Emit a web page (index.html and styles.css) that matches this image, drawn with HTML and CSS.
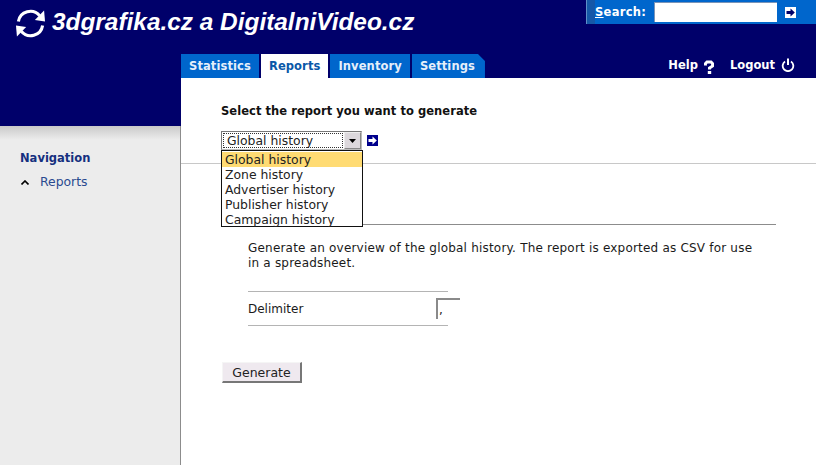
FILE: index.html
```html
<!DOCTYPE html>
<html lang="en">
<head>
<meta charset="utf-8">
<title>Reports</title>
<link rel="stylesheet" href="styles.css">
</head>
<body>
<header class="header">
  <div class="top">
    <div class="brand">
      <svg class="logo" viewBox="0 0 32 32" width="31" height="31">
        <path d="M3.500 14A12.500 12.500 0 0 1 25.500 8" fill="none" stroke="#fff" stroke-width="3.200"/>
        <path d="M20.500 12.500L31 14L30 2.500Z" fill="#fff"/>
        <path d="M28.500 18A12.500 12.500 0 0 1 6.500 24" fill="none" stroke="#fff" stroke-width="3.200"/>
        <path d="M11.500 19.500L1 18L2 29.500Z" fill="#fff"/>
      </svg>
      <span class="brand-name">3dgrafika.cz a DigitalniVideo.cz</span>
    </div>
    <form class="search">
      <label class="search-label"><u>S</u>earch:</label>
      <span class="search-input"></span>
      <svg class="go" viewBox="0 0 11 11" width="11" height="11"><rect width="11" height="11" fill="#fff"/><path d="M1.500 4H5.500V1.500L9.800 5.500L5.500 9.500V7H1.500Z" fill="#00006a"/></svg>
    </form>
  </div>
  <div class="bar">
    <nav class="tabs">
      <a class="tab">Statistics</a>
      <a class="tab tab-active">Reports</a>
      <a class="tab">Inventory</a>
      <a class="tab tab-last">Settings</a>
    </nav>
    <div class="links">
      <a class="link link-help">Help
        <svg class="help-icon" viewBox="0 0 12 14" width="12" height="14"><path d="M2.500 5.500V3.500L4 2H8L9.500 3.500V6L6.500 8V9.500" fill="none" stroke="#fff" stroke-width="3"/><rect x="4.800" y="11" width="3.400" height="3" fill="#fff"/></svg>
      </a>
      <a class="link">Logout
        <svg viewBox="0 0 14 14" width="14" height="14"><path d="M4 3.500A5.300 5.300 0 1 0 10 3.500" fill="none" stroke="#fff" stroke-width="1.800"/><path d="M7 .5V7" stroke="#fff" stroke-width="2"/></svg>
      </a>
    </div>
  </div>
</header>
<div class="layout">
  <aside class="sidebar">
    <div class="sidebar-cap"></div>
    <div class="sidebar-shade"></div>
    <h2 class="nav-title">Navigation</h2>
    <div class="nav-item">
      <svg viewBox="0 0 8 5" width="8" height="5"><path d="M.5 4.500L4 1L7.500 4.500" fill="none" stroke="#000" stroke-width="1.600"/></svg>
      <span>Reports</span>
    </div>
  </aside>
  <main class="content">
    <section class="selector">
      <h1 class="title">Select the report you want to generate</h1>
      <div class="select-row">
        <div class="select">
          <span class="select-value"><span class="select-text">Global history</span></span>
          <span class="select-btn"><svg viewBox="0 0 7 4" width="7" height="4"><path d="M0 0H7L3.500 4Z" fill="#000"/></svg></span>
          <ul class="options">
            <li class="option option-on">Global history</li>
            <li class="option">Zone history</li>
            <li class="option">Advertiser history</li>
            <li class="option">Publisher history</li>
            <li class="option">Campaign history</li>
          </ul>
        </div>
        <svg class="go-blue" viewBox="0 0 11 11" width="11" height="11"><rect width="11" height="11" fill="#00008c"/><path d="M1.500 4H5.500V1.500L9.800 5.500L5.500 9.500V7H1.500Z" fill="#fff"/></svg>
      </div>
    </section>
    <section class="report">
      <div class="report-rule"></div>
      <p class="desc">Generate an overview of the global history. The report is exported as CSV for use in a spreadsheet.</p>
      <div class="field">
        <span class="field-label">Delimiter</span>
        <span class="field-input">,</span>
      </div>
      <button class="btn" type="button">Generate</button>
    </section>
  </main>
</div>
</body>
</html>
```
FILE: styles.css
```css
* { box-sizing: border-box; }
html, body { margin: 0; padding: 0; }
body {
  width: 816px;
  height: 465px;
  overflow: hidden;
  background: #fff;
  font-family: "DejaVu Sans", Verdana, sans-serif;
  font-size: 12px;
  color: #1a1a1a;
  display: flex;
  flex-direction: column;
}
.header {
  height: 78px;
  background: #00006a;
  display: flex;
  flex-direction: column;
  color: #fff;
}
.top {
  height: 54px;
  display: flex;
  justify-content: space-between;
  align-items: flex-start;
}
.brand {
  display: flex;
  align-items: flex-start;
  padding: 7px 0 0 15px;
  gap: 6px;
}
.brand-name {
  font-family: "Liberation Sans", Arial, sans-serif;
  font-style: italic;
  font-weight: 700;
  font-size: 24.400px;
  line-height: 30px;
  color: #fff;
}
.logo { flex: none; margin-top: 1px; }
.search {
  width: 230px;
  height: 24px;
  background: #0066cc;
  display: flex;
  align-items: center;
  padding-left: 8px;
  border-left: 1px solid #5f8fc8;
  box-shadow: inset 8px 0 0 #1558a8;
  font-weight: 700;
  font-size: 11.500px;
}
.search-label { width: 59px; letter-spacing: .3px; }
.search-input {
  width: 123px;
  height: 20px;
  background: #fff;
  border-top: 1px solid #7a94b8;
  border-left: 1px solid #7a94b8;
}
.go { margin-left: 8px; }
.bar {
  height: 24px;
  padding-left: 181px;
  display: flex;
  justify-content: space-between;
}
.tabs { display: flex; gap: 2px; }
.tab {
  height: 24px;
  padding: 0 8px;
  background: #0066cc;
  font-weight: 700;
  font-size: 11.500px;
  line-height: 24px;
  letter-spacing: .1px;
  color: #e6effa;
}
.tab-active { background: #fff; color: #0a58a8; }
.tab-last {
  clip-path: polygon(0 0, calc(100% - 7px) 0, 100% 7px, 100% 100%, 0 100%);
  padding-right: 10px;
}
.links {
  display: flex;
  gap: 15px;
  padding: 1px 21px 0 0;
  font-weight: 700;
  font-size: 11.500px;
}
.link { display: flex; align-items: center; gap: 6px; height: 20px; }
.link-help { gap: 5px; }
.help-icon { margin-top: 3px; }
.layout { flex: 1; display: flex; }
.sidebar {
  width: 181px;
  background: #ececec;
  border-right: 1px solid #8c8c8c;
}
.sidebar-cap { height: 48px; background: #00006a; margin-right: -1px; }
.sidebar-shade { height: 14px; background: linear-gradient(#c9c9c9, #ececec); }
.nav-title {
  margin: 10px 0 0 20px;
  font-size: 11.500px;
  line-height: 16px;
  font-weight: 700;
  color: #15307f;
}
.nav-item {
  margin: 8px 0 0 21px;
  display: flex;
  align-items: center;
  gap: 11px;
  color: #2a4a90;
  font-size: 12.400px;
  line-height: 16px;
}
.content { flex: 1; min-width: 0; }
.selector {
  height: 86px;
  padding: 26px 0 0 40px;
  border-bottom: 1px solid #c8c8c8;
}
.title {
  margin: 0;
  font-size: 11.500px;
  line-height: 14px;
  font-weight: 700;
  letter-spacing: .05px;
  color: #111;
}
.select-row { display: flex; align-items: center; gap: 5px; margin-top: 13px; }
.select {
  position: relative;
  width: 141px;
  height: 19px;
  display: flex;
  background: #fff;
  border: 1px solid #777;
  border-right-color: #bbb;
  border-bottom-color: #bbb;
}
.select-value { flex: 1; padding: 1px; }
.select-text {
  display: block;
  height: 15px;
  border: 1px dotted #333;
  padding-left: 3px;
  font-size: 12.400px;
  line-height: 14px;
  color: #222;
}
.select-btn {
  width: 17px;
  background: #dcd8dc;
  border: 1px solid #888;
  border-top-color: #eee;
  border-left-color: #eee;
  display: flex;
  align-items: center;
  justify-content: center;
}
.options {
  position: absolute;
  left: -1px;
  top: 18px;
  width: 142px;
  height: 77px;
  margin: 0;
  padding: 1px 0 0;
  list-style: none;
  background: #fff;
  border: 1px solid #111;
  z-index: 2;
}
.option {
  height: 15px;
  padding-left: 3px;
  font-size: 12.400px;
  line-height: 15px;
  color: #222;
}
.option-on { background: #ffdb73; }
.go-blue { flex: none; margin-top: -1px; }
.report { padding: 60px 40px 0 40px; }
.report-rule { height: 1px; background: #8c8c8c; }
.desc {
  margin: 16px 20px 0 27px;
  font-size: 12px;
  line-height: 15px;
  color: #1a1a1a;
  letter-spacing: .2px;
}
.field {
  margin: 20px 0 0 27px;
  width: 200px;
  height: 35px;
  border-top: 1px solid #b4b4b4;
  border-bottom: 1px solid #b4b4b4;
  display: flex;
  align-items: center;
  position: relative;
  font-size: 12px;
}
.field-input {
  position: absolute;
  left: 188px;
  top: 6px;
  width: 24px;
  height: 21px;
  background: #fff;
  border-top: 2px solid #8a8a8a;
  border-left: 2px solid #8a8a8a;
  line-height: 20px;
  padding-left: 1px;
}
.btn {
  display: block;
  margin: 36px 0 0 1px;
  width: 80px;
  height: 21px;
  padding: 0;
  background: #efe9ef;
  border: 1px solid #f5f5f5;
  border-right: 2px solid #777;
  border-bottom: 2px solid #777;
  font: 12.500px "DejaVu Sans", Verdana, sans-serif;
  color: #222;
}
```
